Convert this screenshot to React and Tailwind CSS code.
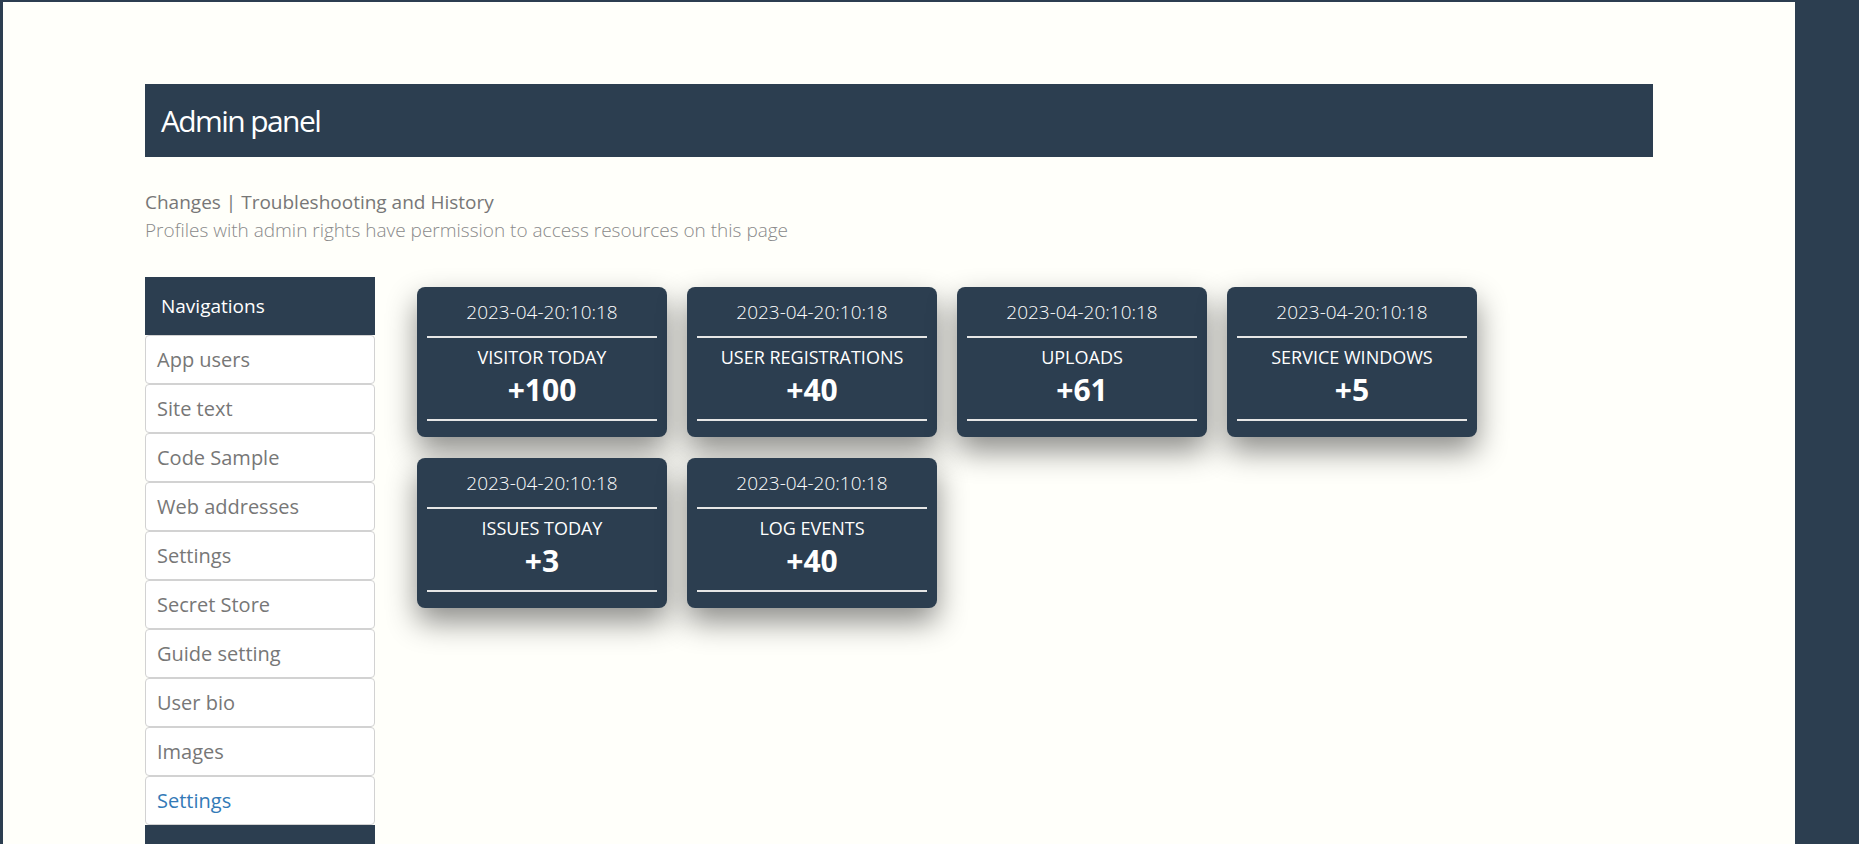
import React from "react";

const navItems = [
  "App users",
  "Site text",
  "Code Sample",
  "Web addresses",
  "Settings",
  "Secret Store",
  "Guide setting",
  "User bio",
  "Images",
];

const stats = [
  { title: "VISITOR TODAY", value: "+100" },
  { title: "USER REGISTRATIONS", value: "+40" },
  { title: "UPLOADS", value: "+61" },
  { title: "SERVICE WINDOWS", value: "+5" },
  { title: "ISSUES TODAY", value: "+3" },
  { title: "LOG EVENTS", value: "+40" },
];

function StatCard({ title, value }) {
  return (
    <div className="w-[250px] h-[150px] rounded-[8px] bg-[#2c3e50] px-[10px] pt-[12px] shadow-[0_14px_30px_rgba(0,0,0,0.45)] text-center">
      <div className="text-[19px] leading-[26px] font-light text-white">2023-04-20:10:18</div>
      <div className="mt-[11px] h-[2px] bg-[#e6e6e6]"></div>
      <div className="mt-[7px] text-[18px] leading-[24px] text-white">{title}</div>
      <div className="mt-[4px] text-[30px] leading-[34px] font-bold text-white">{value}</div>
      <div className="mt-[12px] h-[2px] bg-[#e6e6e6]"></div>
    </div>
  );
}

function Sidebar() {
  return (
    <div className="w-[230px] shrink-0">
      <div className="h-[58px] bg-[#2c3e50] flex items-center pl-4 text-[19px] text-white">
        Navigations
      </div>
      {navItems.map((item, i) => (
        <div
          key={i}
          className="h-[49px] flex items-center pl-[11px] bg-white border border-[#d2d2d2] rounded-[4px] text-[20px] text-[#777]"
        >
          {item}
        </div>
      ))}
      <div className="h-[49px] flex items-center pl-[11px] bg-white border border-[#d2d2d2] rounded-[4px] text-[20px] text-[#337ab7]">
        Settings
      </div>
      <div className="h-[60px] bg-[#2c3e50]"></div>
    </div>
  );
}

export default function App() {
  return (
    <div
      className="h-[844px] overflow-hidden bg-[#2c3e50] pt-[2px] pl-[3px]"
      style={{ fontFamily: '"Open Sans", "Noto Sans", sans-serif' }}
    >
      <div className="w-[1792px] h-full bg-[#fffffa] px-[142px] pt-[82px]">
        <div className="h-[73px] bg-[#2c3e50] flex items-center pl-4 text-[30px] tracking-[-1.6px] text-white">
          Admin panel
        </div>

        <div className="mt-[31px] leading-[28px] text-[19px]">
          <div className="text-[#777]">Changes | Troubleshooting and History</div>
          <div className="font-light text-[#8a8a8a]">
            Profiles with admin rights have permission to access resources on this page
          </div>
        </div>

        <div className="mt-[33px] flex gap-[42px]">
          <Sidebar />
          <div className="mt-[10px] grid grid-cols-[repeat(4,250px)] gap-x-[20px] gap-y-[21px] content-start">
            {stats.map((s, i) => (
              <StatCard key={i} title={s.title} value={s.value} />
            ))}
          </div>
        </div>
      </div>
    </div>
  );
}
